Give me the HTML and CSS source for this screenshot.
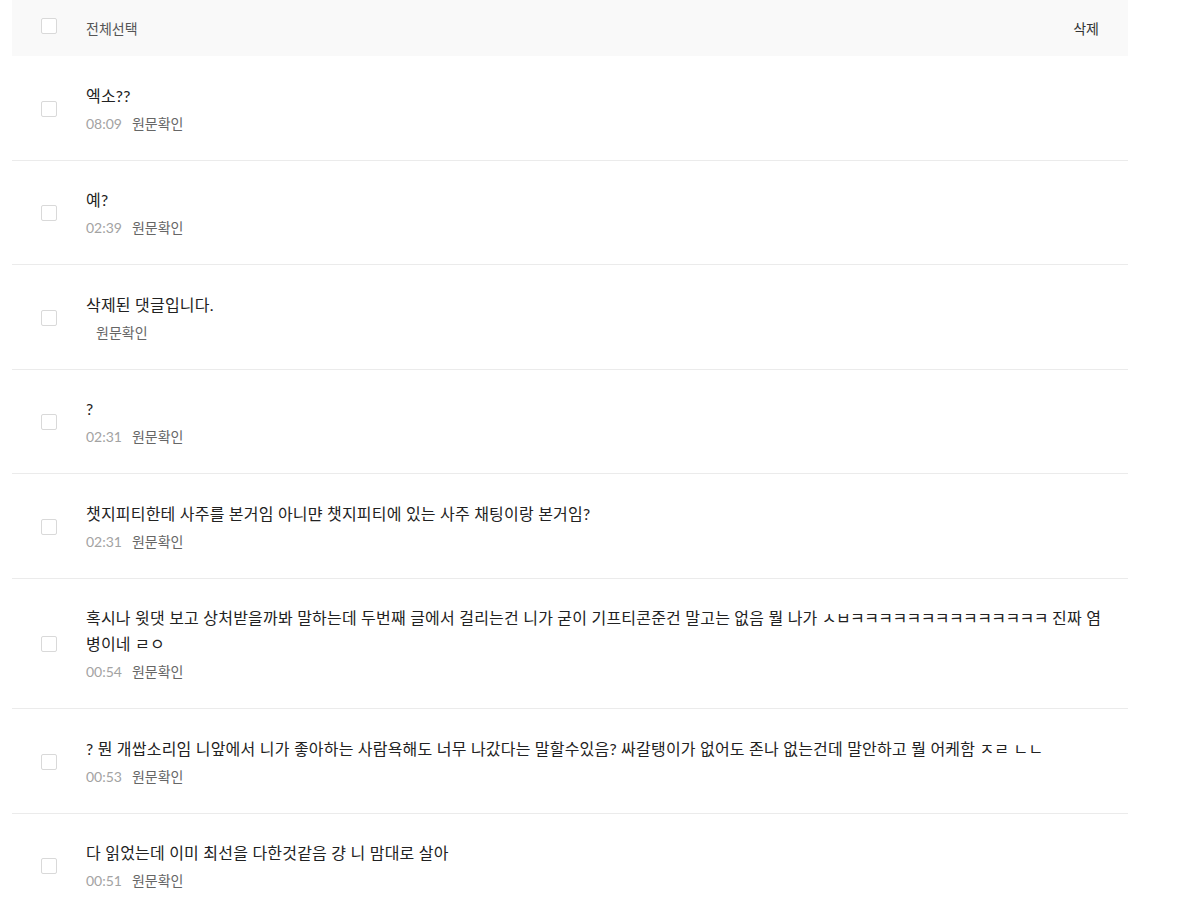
FILE: index.html
```html
<!DOCTYPE html>
<html lang="ko">
<head>
<meta charset="utf-8">
<link rel="stylesheet" href="styles.css">
</head>
<body>
<div class="list">
  <div class="head">
    <span class="check"></span>
    <span class="all">전체선택</span>
    <span class="del">삭제</span>
  </div>
  <div class="row">
    <span class="check"></span>
    <div class="body">
      <p class="title">엑소??</p>
      <p class="meta"><span class="time">08:09</span><a class="link">원문확인</a></p>
    </div>
  </div>
  <div class="row">
    <span class="check"></span>
    <div class="body">
      <p class="title">예?</p>
      <p class="meta"><span class="time">02:39</span><a class="link">원문확인</a></p>
    </div>
  </div>
  <div class="row">
    <span class="check"></span>
    <div class="body">
      <p class="title">삭제된 댓글입니다.</p>
      <p class="meta"><span class="time"></span><a class="link">원문확인</a></p>
    </div>
  </div>
  <div class="row">
    <span class="check"></span>
    <div class="body">
      <p class="title">?</p>
      <p class="meta"><span class="time">02:31</span><a class="link">원문확인</a></p>
    </div>
  </div>
  <div class="row">
    <span class="check"></span>
    <div class="body">
      <p class="title">챗지피티한테 사주를 본거임 아니먄 챗지피티에 있는 사주 채팅이랑 본거임?</p>
      <p class="meta"><span class="time">02:31</span><a class="link">원문확인</a></p>
    </div>
  </div>
  <div class="row">
    <span class="check"></span>
    <div class="body">
      <p class="title">혹시나 윗댓 보고 상처받을까봐 말하는데 두번째 글에서 걸리는건 니가 굳이 기프티콘준건 말고는 없음 뭘 나가 <span class="jamo">ㅅㅂㅋㅋㅋㅋㅋㅋㅋㅋㅋㅋㅋㅋㅋㅋ</span> 진짜 염병이네 ㄹㅇ</p>
      <p class="meta"><span class="time">00:54</span><a class="link">원문확인</a></p>
    </div>
  </div>
  <div class="row">
    <span class="check"></span>
    <div class="body">
      <p class="title">? 뭔 개쌉소리임 니앞에서 니가 좋아하는 사람욕해도 너무 나갔다는 말할수있음? 싸갈탱이가 없어도 존나 없는건데 말안하고 뭘 어케함 ㅈㄹ ㄴㄴ</p>
      <p class="meta"><span class="time">00:53</span><a class="link">원문확인</a></p>
    </div>
  </div>
  <div class="row">
    <span class="check"></span>
    <div class="body">
      <p class="title">다 읽었는데 이미 최선을 다한것같음 걍 니 맘대로 살아</p>
      <p class="meta"><span class="time">00:51</span><a class="link">원문확인</a></p>
    </div>
  </div>
</div>
</body>
</html>
```

FILE: styles.css
```css
html, body {
  margin: 0;
  padding: 0;
  background: #fff;
}
body {
  font-family: Lato, "Noto Sans CJK KR", sans-serif;
  color: #222;
}
.list {
  width: 1116px;
  margin: 0 12px;
}
.head {
  display: flex;
  align-items: center;
  height: 56px;
  background: #f9f9f9;
  padding: 0 29px;
  font-size: 14px;
}
.check {
  flex: none;
  width: 14px;
  height: 14px;
  border: 1px solid #d9d9d9;
  border-radius: 2px;
  background: #fff;
}
.head .check {
  margin-top: -4px;
}
.all {
  margin-left: 29px;
  color: #555;
  flex: 1;
}
.del {
  color: #333;
}
.row {
  display: flex;
  align-items: center;
  padding: 26.5px 22px 25px 29px;
  border-bottom: 1px solid #ebebeb;
}
.body {
  margin-left: 29px;
  flex: 1;
}
.title {
  margin: 0;
  font-size: 16px;
  line-height: 26px;
  letter-spacing: 0.2px;
  color: #222;
}
.jamo {
  letter-spacing: -0.6px;
}
.meta {
  margin: 4px 0 0;
  font-size: 14px;
  line-height: 22px;
}
.time {
  color: #a3a3a3;
}
.link {
  margin-left: 10px;
  color: #666;
}
```
